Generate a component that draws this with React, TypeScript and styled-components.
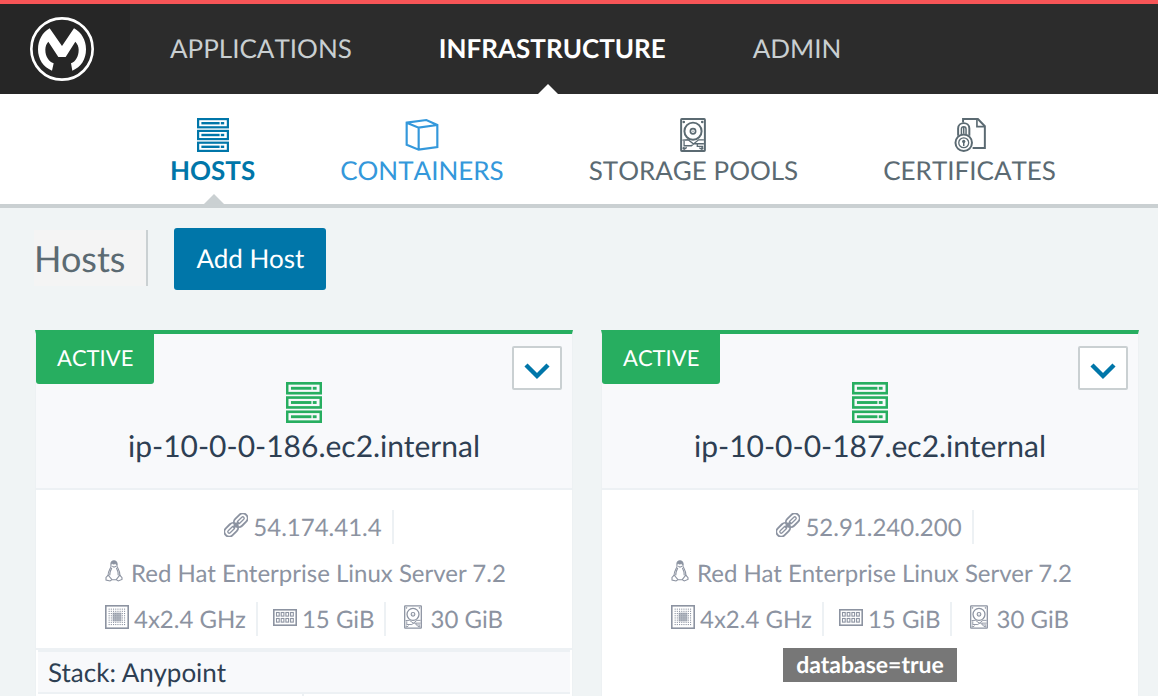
import React from "react";
import styled, { createGlobalStyle } from "styled-components";

const GlobalStyle = createGlobalStyle`
  *, *::before, *::after { box-sizing: border-box; }
  body {
    margin: 0;
    background: #f0f4f5;
    color: #2e3f53;
    font-family: Lato, "Liberation Sans", sans-serif;
    text-rendering: geometricPrecision;
  }
`;

const Page = styled.div`
  display: flex;
  flex-direction: column;
  min-height: 100vh;
`;

const TopBar = styled.header`
  display: flex;
  height: 94px;
  border-top: 4px solid #f85557;
  background: #2c2c2c;
`;

const LogoLink = styled.a`
  display: flex;
  align-items: center;
  width: 130px;
  padding-left: 30px;
  background: #262626;
`;

const MainNav = styled.nav`
  display: flex;
  gap: 87px;
  margin-left: 40px;
  font-kerning: none;
`;

const MainLink = styled.a<{ $active?: boolean }>`
  position: relative;
  display: flex;
  align-items: center;
  padding-bottom: 2px;
  color: ${(p) => (p.$active ? "#fff" : "#c9cfd1")};
  font-size: 26px;
  font-weight: ${(p) => (p.$active ? 700 : 400)};
  text-decoration: none;
  white-space: nowrap;
`;

const Pointer = styled.span<{ $left: number; $color: string }>`
  position: absolute;
  bottom: 0;
  left: ${(p) => p.$left}px;
  border: 10px solid transparent;
  border-top: 0;
  border-bottom-color: ${(p) => p.$color};
`;

const SubNav = styled.nav`
  display: flex;
  gap: 85px;
  height: 114px;
  padding-left: 170px;
  border-bottom: 4px solid #cad0d2;
  background: #fff;
  font-kerning: none;
`;

const SubLink = styled.a<{ $color: string; $active?: boolean }>`
  position: relative;
  display: flex;
  flex-direction: column;
  align-items: center;
  padding-top: 24px;
  color: ${(p) => p.$color};
  font-size: 26px;
  font-weight: ${(p) => (p.$active ? 700 : 400)};
  line-height: 37px;
  text-decoration: none;
  white-space: nowrap;
`;

const Main = styled.main`
  display: flex;
  flex: 1;
  flex-direction: column;
  padding: 20px 19px 0 34px;
`;

const TitleRow = styled.div`
  display: flex;
  align-items: center;
  gap: 26px;
  margin-bottom: 40px;
`;

const Title = styled.h1`
  height: 56px;
  margin: 0 0 2px;
  padding: 0 21px 0 0;
  border-right: 2px solid #cad0d2;
  background: #f4f4f4;
  color: #5b6a72;
  font-size: 36px;
  font-weight: 400;
  line-height: 56px;
`;

const AddButton = styled.button`
  height: 62px;
  padding: 0 22px 2px;
  border: 0;
  border-radius: 3px;
  background: #0076a9;
  color: #fff;
  font: 400 26px Lato, "Liberation Sans", sans-serif;
  text-rendering: geometricPrecision;
`;

const Cards = styled.div`
  display: grid;
  flex: 1;
  grid-template-columns: 1fr 1fr;
  gap: 28px;
  padding-left: 1px;
`;

const Card = styled.article`
  display: flex;
  flex-direction: column;
  border: 1px solid #edf1f3;
  border-top: 4px solid #27ae60;
  border-bottom: 0;
  background: #fff;
`;

const CardHead = styled.div`
  position: relative;
  display: flex;
  flex-direction: column;
  align-items: center;
  height: 156px;
  padding-top: 48px;
  border-bottom: 2px solid #edf1f4;
  background: #f8f9fb;
`;

const State = styled.span`
  position: absolute;
  top: 0;
  left: 0;
  height: 50px;
  padding: 0 21px;
  border-radius: 0 0 3px 3px;
  background: #27ae60;
  color: #fff;
  font-size: 22px;
  font-kerning: none;
  line-height: 48px;
`;

const MenuButton = styled.button`
  position: absolute;
  top: 12px;
  right: 10px;
  display: flex;
  align-items: center;
  justify-content: center;
  width: 50px;
  height: 44px;
  padding: 6px 0 0;
  border: 2px solid #cad0d2;
  border-radius: 2px;
  background: #fff;
  color: #0076a9;
`;

const HostName = styled.h2`
  margin: 6px 0 0;
  font-size: 30px;
  font-weight: 400;
  line-height: 35px;
`;

const Facts = styled.div`
  display: flex;
  flex-direction: column;
  align-items: center;
  padding: 14px 0 6px;
  color: #8c93a1;
  font-size: 24px;
  line-height: 36px;
`;

const FactRow = styled.div`
  display: flex;
  align-items: center;
  gap: 5px;
  height: 46px;
`;

const Fact = styled.span<{ $divided?: boolean }>`
  display: flex;
  gap: 5px;
  height: 34px;
  padding: 0 10px;
  border-right: ${(p) => (p.$divided ? "2px solid #edf1f4" : "0")};
  white-space: nowrap;
`;

const IconSlot = styled.span`
  display: flex;
  align-items: center;
  justify-content: center;
  width: 24px;
  height: 30px;
`;

const Label = styled.span`
  align-self: center;
  height: 34px;
  padding: 0 13px;
  background: #777;
  color: #fff;
  font-size: 23px;
  font-weight: 700;
  line-height: 32px;
`;

const Stack = styled.section`
  display: flex;
  flex: 1;
  flex-direction: column;
  padding: 0 2px;
  border-top: 2px solid #edf1f4;
`;

const StackTitle = styled.h3`
  margin: 0;
  padding: 0 10px;
  border: solid #edf1f4;
  border-width: 2px 0;
  background: #f8f9fb;
  font-size: 26px;
  font-weight: 400;
  line-height: 40px;
`;

const StackBody = styled.div`
  display: grid;
  flex: 1;
  grid-template-columns: 1fr 1fr;

  &::before {
    border-right: 2px solid #edf1f4;
    content: "";
  }
`;

const Green = styled.span`
  display: flex;
  color: #27ae60;
`;

const Logo = () => (
  <svg width="64" height="66" viewBox="90 49 192 196" aria-hidden="true">
    <circle cx="186" cy="147" r="92" fill="none" stroke="#fff" strokeWidth="8" />
    <path
      fill="#fff"
      d="M149 85 L186 138 L222 85 C245 98 258 120 258 148 C258 178 243 202 217 212 L213 190 C227 184 236 169 236 149 C236 139 232 131 226 125 L197 171 H175 L145 125 C139 131 136 139 136 149 C136 169 146 184 161 190 L156 212 C130 202 114 178 114 148 C114 120 127 98 149 85 Z"
    />
  </svg>
);

const ServerIcon = ({ width, height }: { width: number; height: number }) => (
  <svg width={width} height={height} viewBox="0 0 32 34" preserveAspectRatio="none" aria-hidden="true">
    {[0, 11.8, 23.6].map((y) => (
      <g key={y} fill="currentColor">
        <rect x="1.1" y={y + 1.1} width="29.8" height="8.2" fill="none" stroke="currentColor" strokeWidth="2.2" />
        <rect x="4.4" y={y + 4} width="18.2" height="2.4" />
        <rect x="23.8" y={y + 4} width="3.4" height="2.4" />
      </g>
    ))}
  </svg>
);

const BoxIcon = () => (
  <svg width="34" height="34" viewBox="74 355 102 102" fill="none" stroke="currentColor" strokeWidth="6.5" aria-hidden="true">
    <path d="M79 369 L138 361 L171 376 V442 L115 450 L79 435 Z M79 369 L115 384 L171 376 M115 384 V450" />
  </svg>
);

const DiskIcon = ({ width, height, weight }: { width: number; height: number; weight: number }) => (
  <svg width={width} height={height} viewBox="0 0 78 103" fill="none" stroke="currentColor" strokeWidth={weight} aria-hidden="true">
    <rect x="3" y="3" width="72" height="97" rx="2" />
    <circle cx="39" cy="40" r="26" />
    <circle cx="39" cy="40" r="8" strokeWidth="5" />
    <circle cx="39" cy="40" r="2" fill="currentColor" stroke="none" />
    <g strokeWidth="4">
      <path d="M7 67 L24 66 L40 78 H72 M10 84 H34 L56 66 H72 M12 70 V82 M52 78 V86 H70 M12 95 L20 89 M66 95 L58 90" />
      <circle cx="11" cy="12" r="2" />
      <circle cx="67" cy="12" r="2" />
      <circle cx="11" cy="92" r="2" />
      <circle cx="67" cy="92" r="2" />
    </g>
  </svg>
);

const CertificateIcon = () => (
  <svg width="34" height="34" viewBox="-3 0 102 103" fill="none" stroke="currentColor" strokeWidth="6" aria-hidden="true">
    <path d="M27 14 V3 H72 L93 25 V91 H56" />
    <path d="M69 4 V26 H92" strokeWidth="5" />
    <path d="M12 54 V32 C12 10 46 10 46 32 V54" />
    <path d="M22 50 V33 C22 24 36 24 36 33 V50 M29 28 V48" strokeWidth="4.5" />
    <circle cx="29" cy="75" r="25" />
    <circle cx="29" cy="75" r="15" strokeWidth="4" />
    <circle cx="29" cy="71" r="5" fill="currentColor" stroke="none" />
    <path d="M29 71 V85" strokeWidth="4.5" />
  </svg>
);

const ChevronIcon = () => (
  <svg width="26" height="17" viewBox="0 0 26 17" fill="none" stroke="currentColor" strokeWidth="4.4" aria-hidden="true">
    <path d="M2 2 L13 13 L24 2" />
  </svg>
);

const LinkIcon = () => (
  <svg width="24" height="24" viewBox="0 0 24 24" fill="none" stroke="currentColor" strokeWidth="1.9" aria-hidden="true">
    <g transform="rotate(-45 12 12)">
      <rect x="-2.4" y="7.2" width="15.4" height="9.6" rx="4.8" />
      <rect x="1" y="10.6" width="8.6" height="2.8" rx="1.4" strokeWidth="1.3" />
      <rect x="11" y="7.2" width="15.4" height="9.6" rx="4.8" />
      <rect x="14.4" y="10.6" width="8.6" height="2.8" rx="1.4" strokeWidth="1.3" />
      <path d="M8 12 H16" strokeWidth="2.4" />
    </g>
  </svg>
);

const PenguinIcon = () => (
  <svg width="18" height="22" viewBox="0 0 18 22" fill="none" stroke="currentColor" strokeWidth="1.1" aria-hidden="true">
    <path d="M6 7 C5.6 3 6 1 9 1 C12 1 12.2 3.4 12 6.5 C13.5 9.5 15.4 12 15 16 M6 7 C4.5 10 2.7 12 3 16" />
    <path d="M6.2 4 C6.2 1.2 7.2 .8 9 .8 C11 .8 12 1.6 12 5 L10.3 3.8 L8.6 4.2 L7.3 3.7 Z" fill="currentColor" strokeWidth=".6" />
    <path d="M7.3 6.2 L9 7.2 L11 6.2 M6.8 8 C5.2 11 4.4 13 4.8 15.4 M11.4 8 C13 11 13.6 13 13.2 15.4" />
    <path d="M3.2 15.2 L1 17.4 V20 L5 21 L7 19.6 Z M14.8 15.2 L17 17.6 V19.4 L13.2 21 L11.2 19.6 Z M7 19.8 H11.2" />
  </svg>
);

const dots = [4.5, 6.7, 8.9, 11.1, 13.3, 15.5, 17.7, 19.9];

const CpuIcon = () => (
  <svg width="24" height="24" viewBox="0 0 24 24" fill="currentColor" aria-hidden="true">
    <rect x=".8" y=".8" width="22.4" height="22.4" fill="none" stroke="currentColor" strokeWidth="1.6" />
    {dots.map((y) =>
      dots.map((x) => <rect key={`${x}-${y}`} x={x - 0.9} y={y - 0.9} width="1.1" height="1.1" />)
    )}
    <rect x="7.6" y="7.6" width="8.8" height="8.8" opacity=".65" />
  </svg>
);

const MemoryIcon = () => (
  <svg width="24" height="17" viewBox="0 0 24 17" fill="none" stroke="currentColor" aria-hidden="true">
    <rect x=".8" y=".8" width="22.4" height="15.4" strokeWidth="1.6" />
    {[3.5, 8.2, 12.9, 17.6].map((x) => (
      <g key={x} strokeWidth="1.1">
        <rect x={x} y="3.5" width="2.7" height="3.6" />
        <rect x={x} y="9.5" width="2.7" height="3.6" />
      </g>
    ))}
  </svg>
);

interface HostCardProps {
  name: string;
  address: string;
  label?: string;
  stack?: string;
}

const HostCard = ({ name, address, label, stack }: HostCardProps) => (
  <Card>
    <CardHead>
      <State>ACTIVE</State>
      <MenuButton type="button" aria-label={`Actions for ${name}`}>
        <ChevronIcon />
      </MenuButton>
      <Green>
        <ServerIcon width={36} height={41} />
      </Green>
      <HostName>{name}</HostName>
    </CardHead>
    <Facts>
      <FactRow>
        <Fact $divided>
          <IconSlot><LinkIcon /></IconSlot>
          {address}
        </Fact>
      </FactRow>
      <FactRow>
        <Fact>
          <IconSlot><PenguinIcon /></IconSlot>
          Red Hat Enterprise Linux Server 7.2
        </Fact>
      </FactRow>
      <FactRow>
        <Fact $divided>
          <IconSlot><CpuIcon /></IconSlot>
          4x2.4 GHz
        </Fact>
        <Fact $divided>
          <IconSlot><MemoryIcon /></IconSlot>
          15 GiB
        </Fact>
        <Fact>
          <IconSlot><DiskIcon width={18} height={24} weight={5.5} /></IconSlot>
          30 GiB
        </Fact>
      </FactRow>
    </Facts>
    {label && <Label>{label}</Label>}
    {stack && (
      <Stack>
        <StackTitle>Stack: {stack}</StackTitle>
        <StackBody />
      </Stack>
    )}
  </Card>
);

export default function App() {
  return (
    <Page>
      <GlobalStyle />
      <TopBar>
        <LogoLink href="#" aria-label="Home">
          <Logo />
        </LogoLink>
        <MainNav>
          <MainLink href="#">APPLICATIONS</MainLink>
          <MainLink href="#" $active>
            INFRASTRUCTURE
            <Pointer $left={99} $color="#fff" />
          </MainLink>
          <MainLink href="#">ADMIN</MainLink>
        </MainNav>
      </TopBar>
      <SubNav>
        <SubLink href="#" $color="#0076a9" $active>
          <ServerIcon width={32} height={34} />
          HOSTS
          <Pointer $left={34} $color="#cad0d2" />
        </SubLink>
        <SubLink href="#" $color="#3498db">
          <BoxIcon />
          CONTAINERS
        </SubLink>
        <SubLink href="#" $color="#5b6a72">
          <DiskIcon width={26} height={34} weight={6} />
          STORAGE POOLS
        </SubLink>
        <SubLink href="#" $color="#5b6a72">
          <CertificateIcon />
          CERTIFICATES
        </SubLink>
      </SubNav>
      <Main>
        <TitleRow>
          <Title>Hosts</Title>
          <AddButton type="button">Add Host</AddButton>
        </TitleRow>
        <Cards>
          <HostCard name="ip-10-0-0-186.ec2.internal" address="54.174.41.4" stack="Anypoint" />
          <HostCard name="ip-10-0-0-187.ec2.internal" address="52.91.240.200" label="database=true" />
        </Cards>
      </Main>
    </Page>
  );
}
